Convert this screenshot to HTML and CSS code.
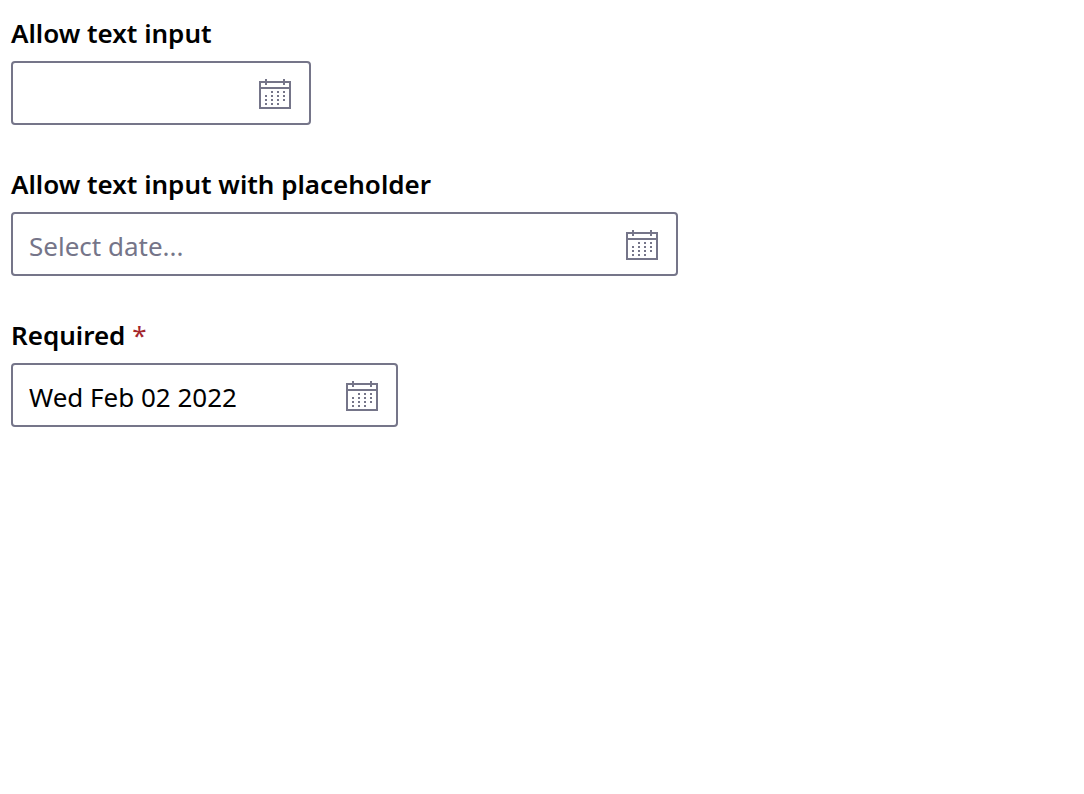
FILE: index.html
```html
<!DOCTYPE html>
<html lang="en">
<head>
<meta charset="utf-8">
<title>Date picker</title>
<link rel="stylesheet" href="styles.css">
</head>
<body>
<svg class="sprite" aria-hidden="true">
  <symbol id="calendar" viewBox="0 0 32 32">
    <path d="M1 5H31V31H1ZM1 11H31M7 2V8M25 2V8" fill="none" stroke="currentColor" stroke-width="2"/>
    <path d="M12 14h2v2h-2zM18 14h2v2h-2zM24 14h2v2h-2zM6 18h2v2h-2zM12 18h2v2h-2zM18 18h2v2h-2zM24 18h2v2h-2zM6 22h2v2h-2zM12 22h2v2h-2zM18 22h2v2h-2zM24 22h2v2h-2zM6 26h2v2h-2zM12 26h2v2h-2zM18 26h2v2h-2z" fill="currentColor"/>
  </symbol>
</svg>
<main class="form">
  <div class="field">
    <label class="label" for="date-text">Allow text input</label>
    <div class="picker picker-small">
      <input class="input" id="date-text" type="text">
      <button class="toggle" type="button" aria-label="Open calendar"><svg class="icon"><use href="#calendar"/></svg></button>
    </div>
  </div>
  <div class="field">
    <label class="label" for="date-placeholder">Allow text input with placeholder</label>
    <div class="picker picker-large">
      <input class="input" id="date-placeholder" type="text" placeholder="Select date...">
      <button class="toggle" type="button" aria-label="Open calendar"><svg class="icon"><use href="#calendar"/></svg></button>
    </div>
  </div>
  <div class="field">
    <label class="label" for="date-required">Required <span class="star">*</span></label>
    <div class="picker picker-medium">
      <input class="input" id="date-required" type="text" value="Wed Feb 02 2022" required>
      <button class="toggle" type="button" aria-label="Open calendar"><svg class="icon"><use href="#calendar"/></svg></button>
    </div>
  </div>
</main>
</body>
</html>
```
FILE: styles.css
```css
* { box-sizing: border-box; }
body { margin: 0; background: #fff; color: #000; font-family: "Segoe UI", "Noto Sans", sans-serif; }
.sprite { display: none; }
.form { display: flex; flex-direction: column; gap: 39px; padding: 13px 11px; }
.field { display: flex; flex-direction: column; gap: 8px; }
.label { font-size: 26px; line-height: 40px; font-weight: 600; }
.star { color: #a4262c; font-weight: 400; }
.picker { display: flex; align-items: center; height: 64px; max-width: 100%; border: 2px solid #757589; border-radius: 4px; }
.picker-small { width: 300px; }
.picker-large { width: 667px; }
.picker-medium { width: 387px; }
.input { flex: 1; min-width: 0; height: 100%; padding: 3px 16px 0; border: 0; outline: 0; background: transparent; color: inherit; font: 26px "Segoe UI", "Noto Sans", sans-serif; }
.input::placeholder { color: #757589; opacity: 1; }
.toggle { display: flex; padding: 0 18px 0 0; border: 0; background: transparent; color: #757589; }
.icon { width: 32px; height: 32px; }
```
